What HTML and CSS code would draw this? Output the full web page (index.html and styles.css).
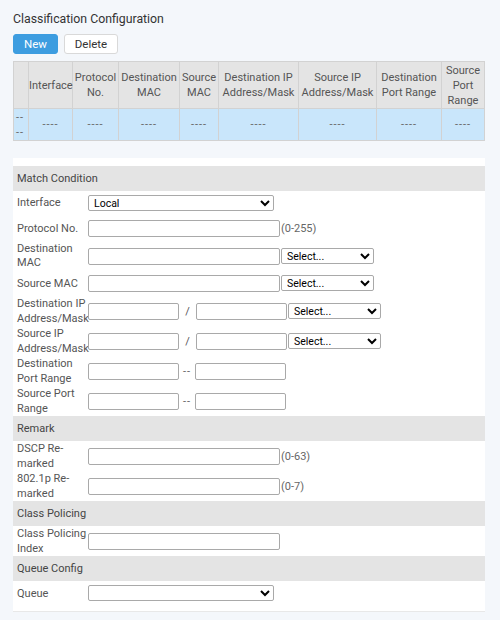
FILE: index.html
```html
<!DOCTYPE html>
<html lang="en">
<head>
  <meta charset="UTF-8" />
  <title>Classification Configuration</title>
  <link rel="stylesheet" href="styles.css">
</head>
<body>

<div class="page">
  <h1 class="title">Classification Configuration</h1>
  <div class="toolbar">
    <button class="btn btn-primary">New</button>
    <button class="btn">Delete</button>
  </div>

  <table class="list">
    <colgroup>
      <col style="width:15px">
      <col style="width:44px">
      <col style="width:46px">
      <col style="width:61px">
      <col style="width:39px">
      <col style="width:80px">
      <col style="width:78px">
      <col style="width:65px">
      <col>
    </colgroup>
    <tr>
      <th></th>
      <th>Interface</th>
      <th>Protocol No.</th>
      <th>Destination MAC</th>
      <th>Source MAC</th>
      <th>Destination IP Address/Mask</th>
      <th>Source IP Address/Mask</th>
      <th>Destination Port Range</th>
      <th>Source Port Range</th>
    </tr>
    <tr class="sel">
      <td>-- --</td>
      <td>----</td>
      <td>----</td>
      <td>----</td>
      <td>----</td>
      <td>----</td>
      <td>----</td>
      <td>----</td>
      <td>----</td>
    </tr>
  </table>

  <div class="panel">
    <div class="section">Match Condition</div>
    <div class="row first">
      <label>Interface</label>
      <select class="sel-wide"><option>Local</option></select>
    </div>
    <div class="row">
      <label>Protocol No.</label>
      <input type="text" class="txt">
      <span class="hint">(0-255)</span>
    </div>
    <div class="row">
      <label class="tight">Destination MAC</label>
      <input type="text" class="txt">
      <select class="sel-small"><option>Select...</option></select>
    </div>
    <div class="row short">
      <label>Source MAC</label>
      <input type="text" class="txt">
      <select class="sel-small"><option>Select...</option></select>
    </div>
    <div class="row tall">
      <label>Destination IP Address/Mask</label>
      <input type="text" class="txt-half">
      <span class="sep">/</span>
      <input type="text" class="txt-half">
      <select class="sel-small"><option>Select...</option></select>
    </div>
    <div class="row tall">
      <label>Source IP Address/Mask</label>
      <input type="text" class="txt-half">
      <span class="sep">/</span>
      <input type="text" class="txt-half">
      <select class="sel-small"><option>Select...</option></select>
    </div>
    <div class="row tall">
      <label>Destination Port Range</label>
      <input type="text" class="txt-half">
      <span class="dash">--</span>
      <input type="text" class="txt-half">
    </div>
    <div class="row tall">
      <label>Source Port Range</label>
      <input type="text" class="txt-half">
      <span class="dash">--</span>
      <input type="text" class="txt-half">
    </div>

    <div class="section">Remark</div>
    <div class="row tall">
      <label>DSCP Re-marked</label>
      <input type="text" class="txt">
      <span class="hint">(0-63)</span>
    </div>
    <div class="row tall">
      <label>802.1p Re-marked</label>
      <input type="text" class="txt">
      <span class="hint">(0-7)</span>
    </div>

    <div class="section">Class Policing</div>
    <div class="row tall">
      <label>Class Policing Index</label>
      <input type="text" class="txt">
    </div>

    <div class="section">Queue Config</div>
    <div class="row last">
      <label>Queue</label>
      <select class="sel-wide"><option></option></select>
    </div>
  </div>
</div>

</body>
</html>
```

FILE: styles.css
```css
body {
  margin: 0;
  background: #f4f7fb;
  font-family: Roboto, 'Open Sans', sans-serif;
  font-size: 11px;
  color: #555;
}
.page {
  padding: 9px 15px 0 13px;
}
.title {
  margin: 0;
  font-size: 12.3px;
  font-weight: normal;
  color: #333;
  line-height: 20px;
}
.toolbar {
  display: flex;
  gap: 6px;
  margin-top: 5px;
}
.btn {
  font-family: inherit;
  font-size: 11.5px;
  height: 20px;
  width: 54px;
  padding: 0;
  border: 1px solid #d9d9d9;
  border-radius: 3px;
  background: #fff;
  color: #333;
}
.btn-primary {
  background: #3d9de0;
  border-color: #3d9de0;
  color: #fff;
  width: 45px;
}
.list {
  margin-top: 7px;
  width: 472px;
  border-collapse: collapse;
  table-layout: fixed;
  line-height: 15px;
}
.list th,
.list td {
  border: 1px solid #d2d2d2;
  text-align: center;
  padding: 0;
  font-weight: normal;
  color: #555;
}
.list th {
  background: #e4e4e4;
  height: 46px;
}
.list .sel td {
  background: #c9e6fb;
  height: 31px;
  color: #666;
  letter-spacing: 1px;
}
.list .sel td:first-child {
  text-align: left;
  padding-left: 2px;
}
.panel {
  margin-top: 17px;
  width: 472px;
  background: #fff;
  padding: 8px 0 6px;
  border-bottom: 1px solid #e8e8e8;
}
.section {
  background: #e4e4e4;
  height: 25px;
  line-height: 25px;
  padding-left: 4px;
  color: #444;
}
.row {
  display: flex;
  align-items: center;
  height: 28px;
  padding-left: 4px;
}
.row.first {
  height: 23px;
}
.row.short {
  height: 26px;
}
.row.tall {
  height: 30px;
}
.row.last {
  height: 24px;
}
.row label {
  width: 71px;
  line-height: 15px;
  flex: none;
}
.row label.tight {
  line-height: 14px;
}
input,
select {
  font-family: Roboto, 'Open Sans', sans-serif;
  box-sizing: border-box;
  margin: 0;
}
.txt,
.txt-half {
  height: 17px;
  border: 1px solid #a9a9a9;
  border-radius: 2px;
  padding: 0 3px;
}
.txt {
  width: 192px;
}
.txt-half {
  width: 91px;
}
select {
  height: 16px;
  border: 1px solid #a9a9a9;
  border-radius: 2px;
  font-size: 10.5px;
  padding: 0 1px;
  color: #000;
  background: #fff;
}
.sel-wide {
  width: 186px;
}
.sel-small {
  width: 93px;
  margin-left: 1px;
}
.hint {
  color: #666;
  margin-left: 1px;
}
.sep {
  width: 17px;
  text-align: center;
}
.dash {
  width: 16px;
  padding-left: 4px;
  box-sizing: border-box;
  color: #666;
  letter-spacing: 1px;
}
```
